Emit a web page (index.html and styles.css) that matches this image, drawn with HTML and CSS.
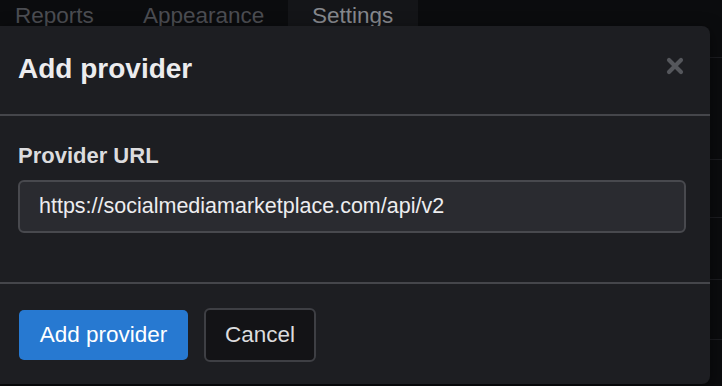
FILE: index.html
```html
<!DOCTYPE html>
<html lang="en">
<head>
    <meta charset="UTF-8">
    <meta name="viewport" content="width=device-width, initial-scale=1.0">
    <title>Add provider</title>
    <link rel="stylesheet" href="styles.css">
</head>
<body>
    <div class="page">
        <div class="tabs">
            <span class="tab">Reports</span>
            <span class="tab">Appearance</span>
            <span class="tab active">Settings</span>
        </div>
        <div class="rows">
            <div class="row row-tall"></div>
            <div class="row"></div>
            <div class="row"></div>
            <div class="row"></div>
            <div class="row"></div>
        </div>
    </div>

    <div class="modal">
        <div class="modal-header">
            <h2>Add provider</h2>
            <button class="close" aria-label="Close">
                <svg width="18" height="18" viewBox="0 0 18 18">
                    <path d="M3 3 L15 15 M15 3 L3 15" stroke="#55575c" stroke-width="4.2" stroke-linecap="round"/>
                </svg>
            </button>
        </div>
        <div class="modal-body">
            <label class="field-label" for="provider-url">Provider URL</label>
            <input class="field-input" id="provider-url" type="text" value="https://socialmediamarketplace.com/api/v2">
        </div>
        <div class="modal-footer">
            <button class="btn btn-primary">Add provider</button>
            <button class="btn btn-default">Cancel</button>
        </div>
    </div>
</body>
</html>
```

FILE: styles.css
```css
* {
    margin: 0;
    padding: 0;
    box-sizing: border-box;
}

body {
    font-family: 'Liberation Sans', Arial, sans-serif;
    background: #0b0c0e;
    color: #e6e6e8;
    overflow: hidden;
    height: 386px;
}

.page {
    min-height: 386px;
}

/* tab strip behind the dialog */
.tabs {
    display: flex;
    height: 26px;
}

.tab {
    font-size: 22.5px;
    color: #4b4d52;
    line-height: 26px;
    padding-top: 3px;
    white-space: nowrap;
}

.tab:first-child {
    margin-left: 15px;
    width: 128px;
}

.tab:nth-child(2) {
    width: 145px;
}

.tab.active {
    background: #141518;
    color: #86888d;
    padding-left: 24px;
    width: 130px;
}

.rows {
    padding-top: 31px;
}

.row {
    height: 60px;
    border-top: 1px solid #1c1d21;
}

.row-tall {
    height: 102px;
}

.row:nth-child(2) {
    height: 58px;
}

.row:nth-child(3) {
    height: 62px;
}

/* dialog */
.modal {
    position: absolute;
    left: 0;
    top: 26px;
    width: 710px;
    height: 358px;
    background: #1d1e22;
    border-radius: 0 8px 8px 0;
    box-shadow: 0 4px 16px rgba(0, 0, 0, 0.5);
    display: flex;
    flex-direction: column;
}

.modal-header {
    height: 90px;
    padding: 0 26px 3px 18px;
    display: flex;
    align-items: center;
    justify-content: space-between;
    border-bottom: 2px solid #45464b;
}

.modal-header h2 {
    font-size: 28px;
    font-weight: bold;
    color: #ececee;
}

.close {
    background: none;
    border: 0;
    display: flex;
    margin-top: -6px;
}

.modal-body {
    height: 168px;
    padding: 28px 24px 0 18px;
    border-bottom: 2px solid #45464b;
}

.field-label {
    display: block;
    font-size: 22px;
    font-weight: bold;
    color: #dcdcde;
    line-height: 24px;
    margin-bottom: 12px;
}

.field-input {
    display: block;
    width: 668px;
    height: 53px;
    padding: 0 19px;
    background: #2a2b30;
    border: 2px solid #48494e;
    border-radius: 6px;
    color: #ededef;
    font-family: 'Liberation Sans', Arial, sans-serif;
    font-size: 21.5px;
    outline: none;
}

.modal-footer {
    flex: 1;
    display: flex;
    align-items: center;
    gap: 16px;
    padding: 2px 19px 0;
}

.btn {
    font-family: 'Liberation Sans', Arial, sans-serif;
    font-size: 22.5px;
    border-radius: 5px;
    cursor: pointer;
}

.btn-primary {
    background: #2779d1;
    color: #ffffff;
    border: 0;
    width: 169px;
    height: 50px;
}

.btn-default {
    background: #131316;
    color: #dcdcde;
    border: 2px solid #3e3f44;
    border-radius: 6px;
    width: 112px;
    height: 54px;
}
```
